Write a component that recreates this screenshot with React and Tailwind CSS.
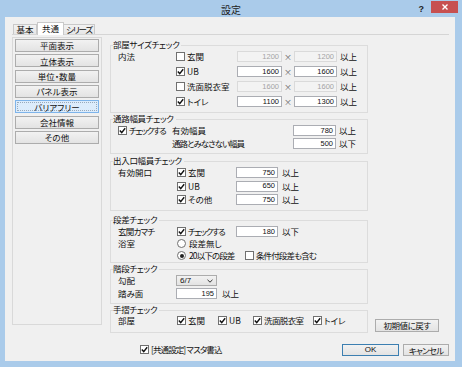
import React from "react";

function Check({ checked, label, className = "", lc = "" }) {
  return (
    <span className={"flex items-center shrink-0 " + className}>
      <span className="w-[9px] h-[9px] shrink-0 border border-[#707070] bg-white flex items-center justify-center">
        {checked && (
          <svg width="7" height="7" viewBox="0 0 7 7">
            <path d="M0.8 3.6 L2.7 5.6 L6.2 1.2" fill="none" stroke="#111" strokeWidth="1.4" />
          </svg>
        )}
      </span>
      {label && <span className={"ml-[2px] whitespace-nowrap " + lc}>{label}</span>}
    </span>
  );
}

function Radio({ checked, label, className = "", lc = "" }) {
  return (
    <span className={"flex items-center shrink-0 " + className}>
      <span className="w-[9px] h-[9px] shrink-0 rounded-full border border-[#707070] bg-white flex items-center justify-center">
        {checked && <span className="w-[4px] h-[4px] rounded-full bg-[#222]" />}
      </span>
      <span className={"ml-[3px] whitespace-nowrap " + lc}>{label}</span>
    </span>
  );
}

function Num({ v, disabled, w }) {
  return (
    <span
      className={`${w} h-[11px] shrink-0 border flex items-center justify-end pr-[2px] text-[7.5px] font-['Liberation_Sans',sans-serif] ${
        disabled ? "border-[#dadada] bg-[#f3f3f3] text-[#a3a3a3]" : "border-[#abadb3] bg-white text-[#111]"
      }`}
    >
      {v}
    </span>
  );
}

function Group({ title, className, children }) {
  return (
    <div className={"relative border border-[#dcdcdc] w-[258px] " + className}>
      <span className="absolute left-[2px] top-[-6px] bg-[#f0f0f0] pr-[2px] leading-none tracking-[-0.3px]">{title}</span>
      {children}
    </div>
  );
}

function SideBtn({ label, selected }) {
  return (
    <div
      className={`h-[13px] border flex ${
        selected ? "border-[#7eb4ea] bg-[#dcecfc]" : "border-[#acacac] bg-gradient-to-b from-[#f2f2f2] to-[#e3e3e3]"
      }`}
    >
      <div
        className={`flex-1 flex items-center justify-center ${
          selected ? "m-[1px] border border-dotted border-[#9ab]" : ""
        }`}
      >
        {label}
      </div>
    </div>
  );
}

function Btn({ label, className }) {
  return (
    <div
      className={
        "h-[12px] border bg-gradient-to-b from-[#f2f2f2] to-[#e3e3e3] flex items-center justify-center " + className
      }
    >
      {label}
    </div>
  );
}

const Times = () => <span className="w-[12px] shrink-0 text-center text-[#666] text-[8px]">×</span>;

export default function App() {
  return (
    <div className="w-[462px] h-[367px] bg-[#aacbea] flex flex-col overflow-hidden font-['Noto_Sans_CJK_JP','Noto_Sans',sans-serif] text-[8.5px] leading-none text-[#111] [font-feature-settings:'palt']">
      {/* title bar */}
      <div className="h-[17px] shrink-0 grid grid-cols-[1fr_auto_1fr]">
        <div />
        <div className="pt-[5px] text-[10px] text-[#222]">設定</div>
        <div className="flex justify-end items-start">
          <span className="mt-[5px] mr-[7px] text-[9px] font-bold font-['Liberation_Sans',sans-serif] text-[#222]">?</span>
          <div className="mt-[1px] mr-[4px] w-[27px] h-[12px] bg-[#c75050] flex items-center justify-center">
            <svg width="6" height="6" viewBox="0 0 6 6">
              <path d="M0.5 0.5 L5.5 5.5 M5.5 0.5 L0.5 5.5" stroke="#fff" strokeWidth="1.4" />
            </svg>
          </div>
        </div>
      </div>

      {/* client */}
      <div className="ml-[5px] mr-[7px] mb-[6px] flex-1 bg-[#f0f0f0] flex flex-col">
        {/* tabs */}
        <div className="h-[17px] shrink-0 flex items-end pl-[8px] relative z-10">
          <div className="w-[24px] h-[10px] border border-b-0 border-[#c9c9c9] bg-gradient-to-b from-[#f2f2f2] to-[#e6e6e6] flex items-center justify-center">
            基本
          </div>
          <div className="w-[27px] h-[13px] border border-b-0 border-[#c9c9c9] bg-white flex items-center justify-center mb-[-1px] pb-[1px]">
            共通
          </div>
          <div className="w-[31px] h-[10px] border border-b-0 border-l-0 border-[#c9c9c9] bg-gradient-to-b from-[#f2f2f2] to-[#e6e6e6] flex items-center justify-center tracking-[-1.2px] whitespace-nowrap">
            シリーズ
          </div>
        </div>

        {/* panel */}
        <div className="ml-[7px] mr-[6px] h-[304px] shrink-0 border-t border-[#d5d5d5] flex">
          {/* sidebar */}
          <div className="mt-[2px] w-[90px] h-[288px] border border-[#d9d9d9] px-[2px] pt-[1px] flex flex-col gap-[2.33px]">
            <SideBtn label="平面表示" />
            <SideBtn label="立体表示" />
            <SideBtn label="単位・数量" />
            <SideBtn label="パネル表示" />
            <SideBtn label="バリアフリー" selected />
            <SideBtn label="会社情報" />
            <SideBtn label="その他" />
          </div>

          {/* right column */}
          <div className="ml-[8px] flex flex-col">
            {/* 部屋サイズチェック */}
            <Group title="部屋サイズチェック" className="mt-[10px] h-[68px] pt-[5px] pl-[7px] flex flex-col gap-[4px]">
              <div className="h-[11px] flex items-center">
                <span className="w-[58px]">内法</span>
                <Check label="玄関" className="w-[61px]" />
                <Num v="1200" disabled w="w-[45px]" />
                <Times />
                <Num v="1200" disabled w="w-[43px]" />
                <span className="ml-[3px]">以上</span>
              </div>
              <div className="h-[11px] flex items-center">
                <span className="w-[58px]" />
                <Check checked label="UB" className="w-[61px]" />
                <Num v="1600" w="w-[45px]" />
                <Times />
                <Num v="1600" w="w-[43px]" />
                <span className="ml-[3px]">以上</span>
              </div>
              <div className="h-[11px] flex items-center">
                <span className="w-[58px]" />
                <Check label="洗面脱衣室" className="w-[61px]" />
                <Num v="1600" disabled w="w-[45px]" />
                <Times />
                <Num v="1600" disabled w="w-[43px]" />
                <span className="ml-[3px]">以上</span>
              </div>
              <div className="h-[11px] flex items-center">
                <span className="w-[58px]" />
                <Check checked label="トイレ" className="w-[61px]" />
                <Num v="1100" w="w-[45px]" />
                <Times />
                <Num v="1300" w="w-[43px]" />
                <span className="ml-[3px]">以上</span>
              </div>
            </Group>

            {/* 通路幅員チェック */}
            <Group title="通路幅員チェック" className="mt-[6px] h-[35px] pt-[5px] pl-[7px] flex flex-col gap-[2px]">
              <div className="h-[11px] flex items-center">
                <Check checked label="チェックする" className="w-[54px]" lc="tracking-[-1.3px]" />
                <span className="w-[121px] shrink-0">有効幅員</span>
                <Num v="780" w="w-[43px]" />
                <span className="ml-[3px]">以上</span>
              </div>
              <div className="h-[11px] flex items-center">
                <span className="w-[54px] shrink-0" />
                <span className="w-[121px] shrink-0 tracking-[-1px] whitespace-nowrap">通路とみなさない幅員</span>
                <Num v="500" w="w-[43px]" />
                <span className="ml-[3px]">以下</span>
              </div>
            </Group>

            {/* 出入口幅員チェック */}
            <Group title="出入口幅員チェック" className="mt-[7px] h-[50px] pt-[5px] pl-[7px] flex flex-col gap-[2.5px]">
              <div className="h-[11px] flex items-center">
                <span className="w-[59px]">有効開口</span>
                <Check checked label="玄関" className="w-[59px]" />
                <Num v="750" w="w-[42px]" />
                <span className="ml-[4px]">以上</span>
              </div>
              <div className="h-[11px] flex items-center">
                <span className="w-[59px]" />
                <Check checked label="UB" className="w-[59px]" />
                <Num v="650" w="w-[42px]" />
                <span className="ml-[4px]">以上</span>
              </div>
              <div className="h-[11px] flex items-center">
                <span className="w-[59px]" />
                <Check checked label="その他" className="w-[59px]" />
                <Num v="750" w="w-[42px]" />
                <span className="ml-[4px]">以上</span>
              </div>
            </Group>

            {/* 段差チェック */}
            <Group title="段差チェック" className="mt-[9px] h-[43px] pt-[5px] pl-[7px] flex flex-col gap-[1px]">
              <div className="h-[11px] flex items-center">
                <span className="w-[59px] tracking-[-0.8px] whitespace-nowrap">玄関カマチ</span>
                <Check checked label="チェックする" className="w-[59px]" lc="tracking-[-1.3px]" />
                <Num v="180" w="w-[42px]" />
                <span className="ml-[4px]">以下</span>
              </div>
              <div className="h-[11px] flex items-center">
                <span className="w-[59px]">浴室</span>
                <Radio label="段差無し" />
              </div>
              <div className="h-[11px] flex items-center">
                <span className="w-[59px]" />
                <Radio checked label="20以下の段差" className="w-[68px]" lc="tracking-[-0.9px]" />
                <Check label="条件付段差も含む" lc="tracking-[-0.9px]" />
              </div>
            </Group>

            {/* 階段チェック */}
            <Group title="階段チェック" className="mt-[6px] h-[35px] pt-[5px] pl-[7px] flex flex-col gap-[2px]">
              <div className="h-[11px] flex items-center">
                <span className="w-[58px]">勾配</span>
                <div className="w-[41px] h-[11px] border border-[#acacac] bg-gradient-to-b from-[#f2f2f2] to-[#e3e3e3] flex items-center justify-between pl-[3px] pr-[3px]">
                  <span className="font-['Liberation_Sans',sans-serif] text-[8px]">6/7</span>
                  <svg width="6" height="4" viewBox="0 0 6 4">
                    <path d="M0.5 0.8 L3 3.2 L5.5 0.8" fill="none" stroke="#333" strokeWidth="1" />
                  </svg>
                </div>
              </div>
              <div className="h-[11px] flex items-center">
                <span className="w-[58px]">踏み面</span>
                <Num v="195" w="w-[41px]" />
                <span className="ml-[5px]">以上</span>
              </div>
            </Group>

            {/* 手摺チェック + reset */}
            <div className="mt-[6px] flex items-end">
              <Group title="手摺チェック" className="h-[23px] pt-[4px] pl-[7px] flex flex-col">
                <div className="h-[11px] flex items-center">
                  <span className="w-[59px]">部屋</span>
                  <Check checked label="玄関" className="w-[41px]" />
                  <Check checked label="UB" className="w-[35px]" />
                  <Check checked label="洗面脱衣室" className="w-[60px]" lc="tracking-[-0.6px]" />
                  <Check checked label="トイレ" />
                </div>
              </Group>
              <Btn label="初期値に戻す" className="ml-[7px] mb-[1px] w-[64px] h-[13px] border-[#acacac] tracking-[-0.5px]" />
            </div>
          </div>
        </div>

        {/* bottom row */}
        <div className="pt-[6px] flex items-start">
          <Check checked label="[共通設定] マスタ書込" className="ml-[135px] mt-[1px]" lc="tracking-[-0.9px]" />
          <div className="flex-1" />
          <Btn label="OK" className="w-[57px] border-[#3c7fb1] font-['Liberation_Sans',sans-serif] text-[8px]" />
          <Btn label="キャンセル" className="ml-[4px] mr-[6px] w-[46px] border-[#acacac] tracking-[-0.8px]" />
        </div>
      </div>
    </div>
  );
}
